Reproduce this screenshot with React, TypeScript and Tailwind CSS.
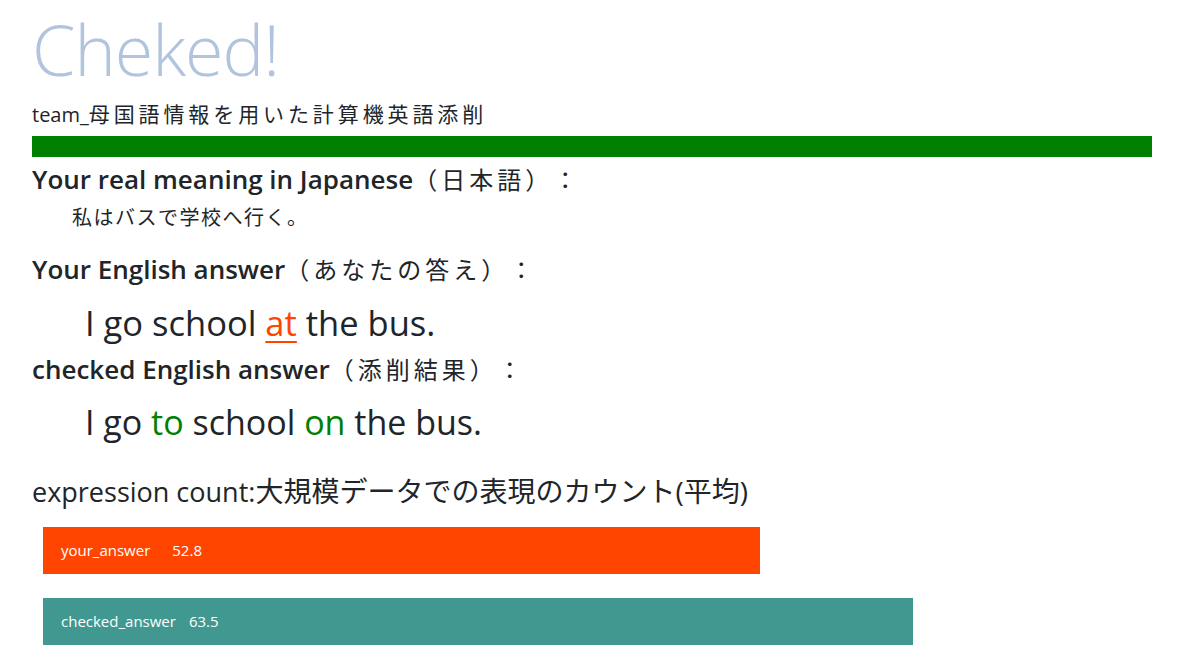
import React from 'react'

const latin = '"Segoe UI", "Open Sans", "Noto Sans CJK JP", sans-serif'

const Bar: React.FC<{ label: string; value: number; width: number; gap: number; color: string }> = ({ label, value, width, gap, color }) => (
  <div
    className={`h-[47px] flex items-center pl-[18px] text-[15px] text-white ${color}`}
    style={{ width }}
  >
    <span>{label}</span>
    <span style={{ marginLeft: gap }}>{value.toFixed(1)}</span>
  </div>
)

export default function App() {
  return (
    <div
      className="w-[1200px] h-[672px] bg-white text-[#212529] overflow-hidden [text-spacing-trim:space-all]"
      style={{ fontFamily: latin }}
    >
      <div className="pl-8 pr-12">
        {/* Title */}
        <h1 className="text-[70px] leading-none font-light text-[#b0c4de] pt-[14px] tracking-[-1px]">Cheked!</h1>
        <div className="text-[20px] leading-[28px] mt-[16px]">
          team_<span className="text-[21px] tracking-[3.9px]">母国語情報を用いた計算機英語添削</span>
        </div>

        <div className="h-[21px] bg-[#008000] mt-[7px]" />

        {/* Japanese meaning */}
        <h3 className="text-[26px] leading-[32px] font-semibold mt-[6px]">
          Your real meaning in Japanese<span className="font-normal text-[24px] tracking-[4px]">（日本語）：</span>
        </h3>
        <p className="text-[20px] leading-[26px] pl-10 mt-[9px] tracking-[1.5px]">私はバスで学校へ行く。</p>

        {/* Your answer */}
        <h3 className="text-[26px] leading-[32px] font-semibold mt-[22px]">
          Your English answer<span className="font-normal text-[24px] tracking-[4px]">（あなたの答え）：</span>
        </h3>
        <p className="text-[34.5px] leading-[44px] pl-[53px] mt-[15px]">
          I go school <span className="text-[#ff4500] underline decoration-2 underline-offset-[5px]">at</span> the bus.
        </p>

        {/* Checked answer */}
        <h3 className="text-[26px] leading-[32px] font-semibold mt-[8px]">
          checked English answer<span className="font-normal text-[24px] tracking-[4px]">（添削結果）：</span>
        </h3>
        <p className="text-[34px] leading-[44px] pl-[53px] mt-[14px]">
          I go <span className="text-[#008000]">to</span> school <span className="text-[#008000]">on</span> the bus.
        </p>

        {/* Expression count */}
        <h3 className="text-[27px] leading-[36px] font-normal mt-[29px]">
          expression count:<span className="text-[28px]">大規模データでの表現のカウント(平均)</span>
        </h3>

        <div className="mt-[17px] pl-[11px] flex flex-col gap-[24px]">
          <Bar label="your_answer" value={52.8} width={717} gap={22} color="bg-[#ff4500]" />
          <Bar label="checked_answer" value={63.5} width={870} gap={13} color="bg-[#409890]" />
        </div>
      </div>
    </div>
  )
}
